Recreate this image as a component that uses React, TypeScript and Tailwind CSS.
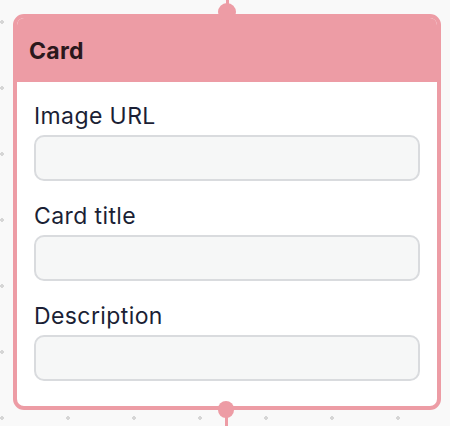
const fields = ["Image URL", "Card title", "Description"];

export default function App() {
  return (
    <div
      className="relative w-[450px] h-[426px] overflow-hidden bg-[#f9f9f9] bg-[radial-gradient(circle_at_2px_22px,#d6d6d6_1.6px,transparent_1.8px)] bg-[size:66px_66px] pt-[14px] pl-[13px]"
      style={{ fontFamily: "Inter, 'Noto Sans', sans-serif" }}
    >
      {/* card node */}
      <div className="w-[428px] h-[396px] rounded-[11px] border-4 border-[#ed9ca5] bg-white overflow-hidden flex flex-col">
        <div className="h-[64px] shrink-0 bg-[#ed9ca5] pl-[12px] pt-[18px]">
          <span className="text-[23px] leading-[30px] font-bold tracking-[0.3px] text-[#2b181c]">
            Card
          </span>
        </div>
        <div className="flex flex-col gap-[20px] px-[17px] pt-[19px]">
          {fields.map((label) => (
            <div key={label} className="flex flex-col gap-[4px]">
              <label className="text-[23px] leading-[30px] tracking-[0.4px] text-[#1b1f35]">
                {label}
              </label>
              <input
                type="text"
                className="h-[46px] w-full rounded-[10px] border-2 border-[#d9dbde] bg-[#f6f7f7] px-3 outline-none"
              />
            </div>
          ))}
        </div>
      </div>

      {/* handles */}
      <div className="absolute left-[226px] top-0 w-[3px] h-[6px] bg-[#ed9ca5]" />
      <div className="absolute left-[218px] top-[3px] w-[18px] h-[18px] rounded-full bg-[#ed9ca5]" />
      <div className="absolute left-[218px] top-[401px] w-[16px] h-[17px] rounded-full bg-[#ed9ca5]" />
      <div className="absolute left-[225px] top-[416px] w-[3px] h-[10px] bg-[#ed9ca5]" />
    </div>
  );
}
